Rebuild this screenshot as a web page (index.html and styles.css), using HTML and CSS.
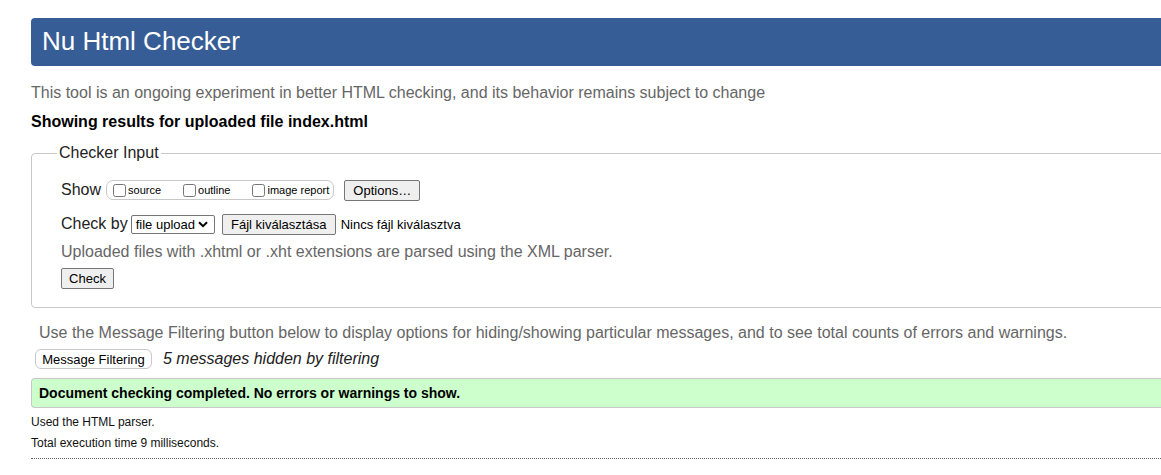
FILE: index.html
```html
<!DOCTYPE html>
<html lang="en">
<head>
<meta charset="utf-8">
<title>Showing results for uploaded file index.html - Nu Html Checker</title>
<link rel="stylesheet" href="styles.css">
</head>
<body>
<div class="page">
  <h1 class="title">Nu Html Checker</h1>
  <p class="intro">This tool is an ongoing experiment in better HTML checking, and its behavior remains subject to change</p>
  <p class="showing">Showing results for uploaded file index.html</p>

  <fieldset class="checker">
    <legend class="legend">Checker Input</legend>
    <div class="row row-show">
      <span class="label">Show</span>
      <span class="opts">
        <label class="opt"><input type="checkbox" class="cb">source</label>
        <label class="opt"><input type="checkbox" class="cb">outline</label>
        <label class="opt opt-last"><input type="checkbox" class="cb">image report</label>
      </span>
      <button class="btn btn-options" type="button">Options…</button>
    </div>
    <div class="row row-check">
      <span class="label">Check by</span>
      <span class="select">file upload<svg class="chev" viewBox="0 0 10 7" width="10" height="7"><path d="M1 1.2 L5 5.2 L9 1.2" fill="none" stroke="#000" stroke-width="2"/></svg></span>
      <button class="btn btn-file" type="button">Fájl kiválasztása</button>
      <span class="nofile">Nincs fájl kiválasztva</span>
    </div>
    <p class="hint">Uploaded files with .xhtml or .xht extensions are parsed using the XML parser.</p>
    <div class="row row-submit">
      <button class="btn btn-check" type="button">Check</button>
    </div>
  </fieldset>

  <p class="filter-info">Use the Message Filtering button below to display options for hiding/showing particular messages, and to see total counts of errors and warnings.</p>
  <div class="filter-row">
    <button class="btn-filter" type="button">Message Filtering</button>
    <span class="hidden-count">5 messages hidden by filtering</span>
  </div>

  <p class="success">Document checking completed. No errors or warnings to show.</p>
  <p class="small">Used the HTML parser.</p>
  <p class="small">Total execution time 9 milliseconds.</p>
  <hr class="sep">
</div>
</body>
</html>
```

FILE: styles.css
```css
html, body {
  margin: 0;
  padding: 0;
  background: #fff;
  overflow: hidden;
}

body {
  font-family: "Liberation Sans", Arial, sans-serif;
  color: #000;
}

.page {
  width: 1200px;
  padding: 18px 0 0 31px;
}

.title {
  margin: 0;
  height: 48px;
  line-height: 47px;
  padding-left: 11px;
  background: #365d95;
  color: #fff;
  font-size: 26px;
  font-weight: normal;
  border-radius: 4px 0 0 4px;
}

.intro {
  margin: 18px 0 0;
  font-size: 16px;
  line-height: 18px;
  color: #666;
}

.showing {
  margin: 11px 0 0;
  font-size: 16px;
  line-height: 18px;
  font-weight: bold;
}

.checker {
  margin: 13px 0 0;
  padding: 16px 0 18px 29px;
  border: 1px solid #c8c8c8;
  border-radius: 4px;
}

.legend {
  margin-left: -4px;
  padding: 0 2px;
  font-size: 16px;
  line-height: 18px;
  color: #222;
}

.row {
  display: flex;
  align-items: center;
}

.label {
  font-size: 16px;
  color: #222;
}

.row-show {
  height: 22px;
  margin-top: 1px;
}

.opts {
  display: flex;
  align-items: center;
  margin-left: 5px;
  height: 18px;
  padding: 0 4px 0 3px;
  border: 1px solid #c8c8c8;
  border-radius: 7px;
}

.opt {
  display: flex;
  align-items: center;
  font-size: 11px;
  margin-right: 19px;
}

.opt-last {
  margin-right: 0;
}

.cb {
  margin: 0 2px 0 3px;
  width: 13px;
  height: 13px;
}

.btn {
  font-family: "Liberation Sans", Arial, sans-serif;
  font-size: 13px;
  color: #000;
  background: #efefef;
  border: 1px solid #767676;
  border-radius: 2px;
  height: 21px;
  padding: 0 8px;
  line-height: 19px;
}

.btn-options {
  margin-left: 10px;
  width: 76px;
  padding: 0;
}

.row-check {
  margin-top: 12px;
  height: 22px;
}

.select {
  display: flex;
  align-items: center;
  margin-left: 3px;
  height: 19px;
  width: 84px;
  box-sizing: border-box;
  padding-left: 4px;
  border: 1px solid #767676;
  border-radius: 2px;
  font-size: 13px;
}

.chev {
  margin-left: 3px;
}

.btn-file {
  margin-left: 7px;
  width: 114px;
  padding: 0;
}

.nofile {
  margin-left: 5px;
  font-size: 13px;
}

.hint {
  margin: 8px 0 0;
  font-size: 16px;
  line-height: 18px;
  color: #666;
}

.row-submit {
  margin-top: 7px;
}

.btn-check {
  width: 53px;
  padding: 0;
}

.filter-info {
  margin: 16px 0 0 8px;
  font-size: 16px;
  line-height: 18px;
  color: #666;
}

.filter-row {
  display: flex;
  align-items: center;
  margin: 6px 0 0 4px;
  height: 22px;
}

.btn-filter {
  font-family: "Liberation Sans", Arial, sans-serif;
  font-size: 13px;
  color: #000;
  background: #fff;
  border: 1px solid #c8c8c8;
  border-radius: 6px;
  height: 20px;
  width: 117px;
  padding: 0;
}

.hidden-count {
  margin-left: 11px;
  font-size: 16px;
  font-style: italic;
  color: #222;
}

.success {
  margin: 8px 0 0;
  height: 28px;
  line-height: 28px;
  padding-left: 7px;
  background: #ccffcc;
  border: 1px solid #c8c8c8;
  border-right: none;
  border-radius: 4px 0 0 4px;
  font-size: 14px;
  font-weight: bold;
}

.small {
  margin: 7px 0 0;
  font-size: 12px;
  line-height: 15px;
  color: #111;
}

.small + .small {
  margin-top: 6px;
}

.sep {
  margin: 7px 0 0;
  border: none;
  border-top: 1px dotted #666;
  height: 0;
}
```
